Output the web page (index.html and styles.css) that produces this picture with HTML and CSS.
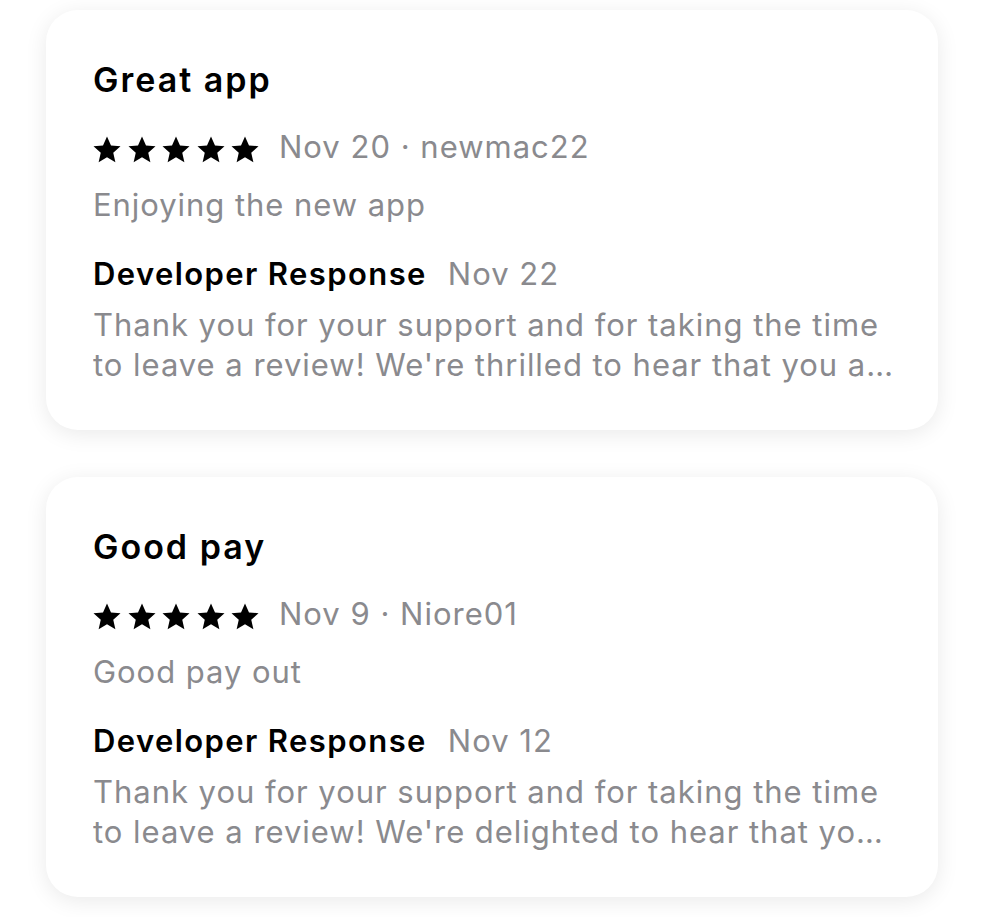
FILE: index.html
```html
<!DOCTYPE html>
<html lang="en">
<head>
    <meta charset="UTF-8">
    <meta name="viewport" content="width=device-width, initial-scale=1.0">
    <title>Ratings and Reviews</title>
    <link rel="stylesheet" href="styles.css">
</head>
<body>
    <main class="review-list">
        <!-- Review 1 -->
        <article class="review-card">
            <h3 class="review-title">Great app</h3>
            <div class="review-meta">
                <span class="stars">
                    <svg viewBox="0 0 24 24"><path d="M12 1.2l3.2 7.1 7.6.7-5.8 5.1 1.7 7.6L12 17.8l-6.7 3.9 1.7-7.6L1.2 9l7.6-.7z"/></svg>
                    <svg viewBox="0 0 24 24"><path d="M12 1.2l3.2 7.1 7.6.7-5.8 5.1 1.7 7.6L12 17.8l-6.7 3.9 1.7-7.6L1.2 9l7.6-.7z"/></svg>
                    <svg viewBox="0 0 24 24"><path d="M12 1.2l3.2 7.1 7.6.7-5.8 5.1 1.7 7.6L12 17.8l-6.7 3.9 1.7-7.6L1.2 9l7.6-.7z"/></svg>
                    <svg viewBox="0 0 24 24"><path d="M12 1.2l3.2 7.1 7.6.7-5.8 5.1 1.7 7.6L12 17.8l-6.7 3.9 1.7-7.6L1.2 9l7.6-.7z"/></svg>
                    <svg viewBox="0 0 24 24"><path d="M12 1.2l3.2 7.1 7.6.7-5.8 5.1 1.7 7.6L12 17.8l-6.7 3.9 1.7-7.6L1.2 9l7.6-.7z"/></svg>
                </span>
                <span class="meta-text">Nov 20 · newmac22</span>
            </div>
            <p class="review-body">Enjoying the new app</p>
            <div class="response-head">
                <span class="response-label">Developer Response</span>
                <span class="response-date">Nov 22</span>
            </div>
            <p class="response-body">Thank you for your support and for taking the time to leave a review! We're thrilled to hear that you are enjoying the new app and we hope to keep you happy.</p>
        </article>

        <!-- Review 2 -->
        <article class="review-card">
            <h3 class="review-title">Good pay</h3>
            <div class="review-meta">
                <span class="stars">
                    <svg viewBox="0 0 24 24"><path d="M12 1.2l3.2 7.1 7.6.7-5.8 5.1 1.7 7.6L12 17.8l-6.7 3.9 1.7-7.6L1.2 9l7.6-.7z"/></svg>
                    <svg viewBox="0 0 24 24"><path d="M12 1.2l3.2 7.1 7.6.7-5.8 5.1 1.7 7.6L12 17.8l-6.7 3.9 1.7-7.6L1.2 9l7.6-.7z"/></svg>
                    <svg viewBox="0 0 24 24"><path d="M12 1.2l3.2 7.1 7.6.7-5.8 5.1 1.7 7.6L12 17.8l-6.7 3.9 1.7-7.6L1.2 9l7.6-.7z"/></svg>
                    <svg viewBox="0 0 24 24"><path d="M12 1.2l3.2 7.1 7.6.7-5.8 5.1 1.7 7.6L12 17.8l-6.7 3.9 1.7-7.6L1.2 9l7.6-.7z"/></svg>
                    <svg viewBox="0 0 24 24"><path d="M12 1.2l3.2 7.1 7.6.7-5.8 5.1 1.7 7.6L12 17.8l-6.7 3.9 1.7-7.6L1.2 9l7.6-.7z"/></svg>
                </span>
                <span class="meta-text">Nov 9 · Niore01</span>
            </div>
            <p class="review-body">Good pay out</p>
            <div class="response-head">
                <span class="response-label">Developer Response</span>
                <span class="response-date">Nov 12</span>
            </div>
            <p class="response-body">Thank you for your support and for taking the time to leave a review! We're delighted to hear that you are enjoying the pay out and we hope to see you again soon.</p>
        </article>
    </main>
</body>
</html>
```

FILE: styles.css
```css
/* General Styles */
body {
    margin: 0;
    font-family: 'Inter', 'Liberation Sans', sans-serif;
    background-color: #ffffff;
    color: #000000;
}

/* Review List */
.review-list {
    display: flex;
    flex-direction: column;
    gap: 47px;
    padding: 10px 47px 20px 46px;
}

.review-card {
    background: white;
    border-radius: 32px;
    box-shadow: 0 4px 22px rgba(0, 0, 0, 0.085);
    height: 420px;
    box-sizing: border-box;
    padding: 49px 38px 0 47px;
}

.review-title {
    margin: 0;
    font-size: 34px;
    font-weight: 600;
    line-height: 42px;
    letter-spacing: 2px;
}

/* Stars + date row */
.review-meta {
    display: flex;
    align-items: center;
    gap: 19px;
    margin-top: 26px;
    height: 40px;
}
.stars {
    display: flex;
    gap: 4.5px;
    margin-top: 5px;
    margin-left: -1px;
}
.stars svg {
    width: 30px;
    height: 30px;
    fill: #000000;
}
.meta-text {
    font-size: 31px;
    line-height: 40px;
    letter-spacing: 1px;
    color: #8a8a8e;
}

.review-body {
    margin: 18px 0 0 0;
    font-size: 31px;
    line-height: 40px;
    letter-spacing: 0.95px;
    color: #8a8a8e;
}

/* Developer Response */
.response-head {
    display: flex;
    align-items: baseline;
    gap: 21px;
    margin-top: 29px;
    line-height: 40px;
}
.response-label {
    font-size: 31px;
    font-weight: 600;
    letter-spacing: 1.4px;
}
.response-date {
    font-size: 31px;
    letter-spacing: 1px;
    color: #8a8a8e;
}
.response-body {
    margin: 11px 0 0 0;
    font-size: 31px;
    line-height: 40px;
    letter-spacing: 0.97px;
    color: #8a8a8e;
    display: -webkit-box;
    -webkit-line-clamp: 2;
    -webkit-box-orient: vertical;
    overflow: hidden;
}
```
